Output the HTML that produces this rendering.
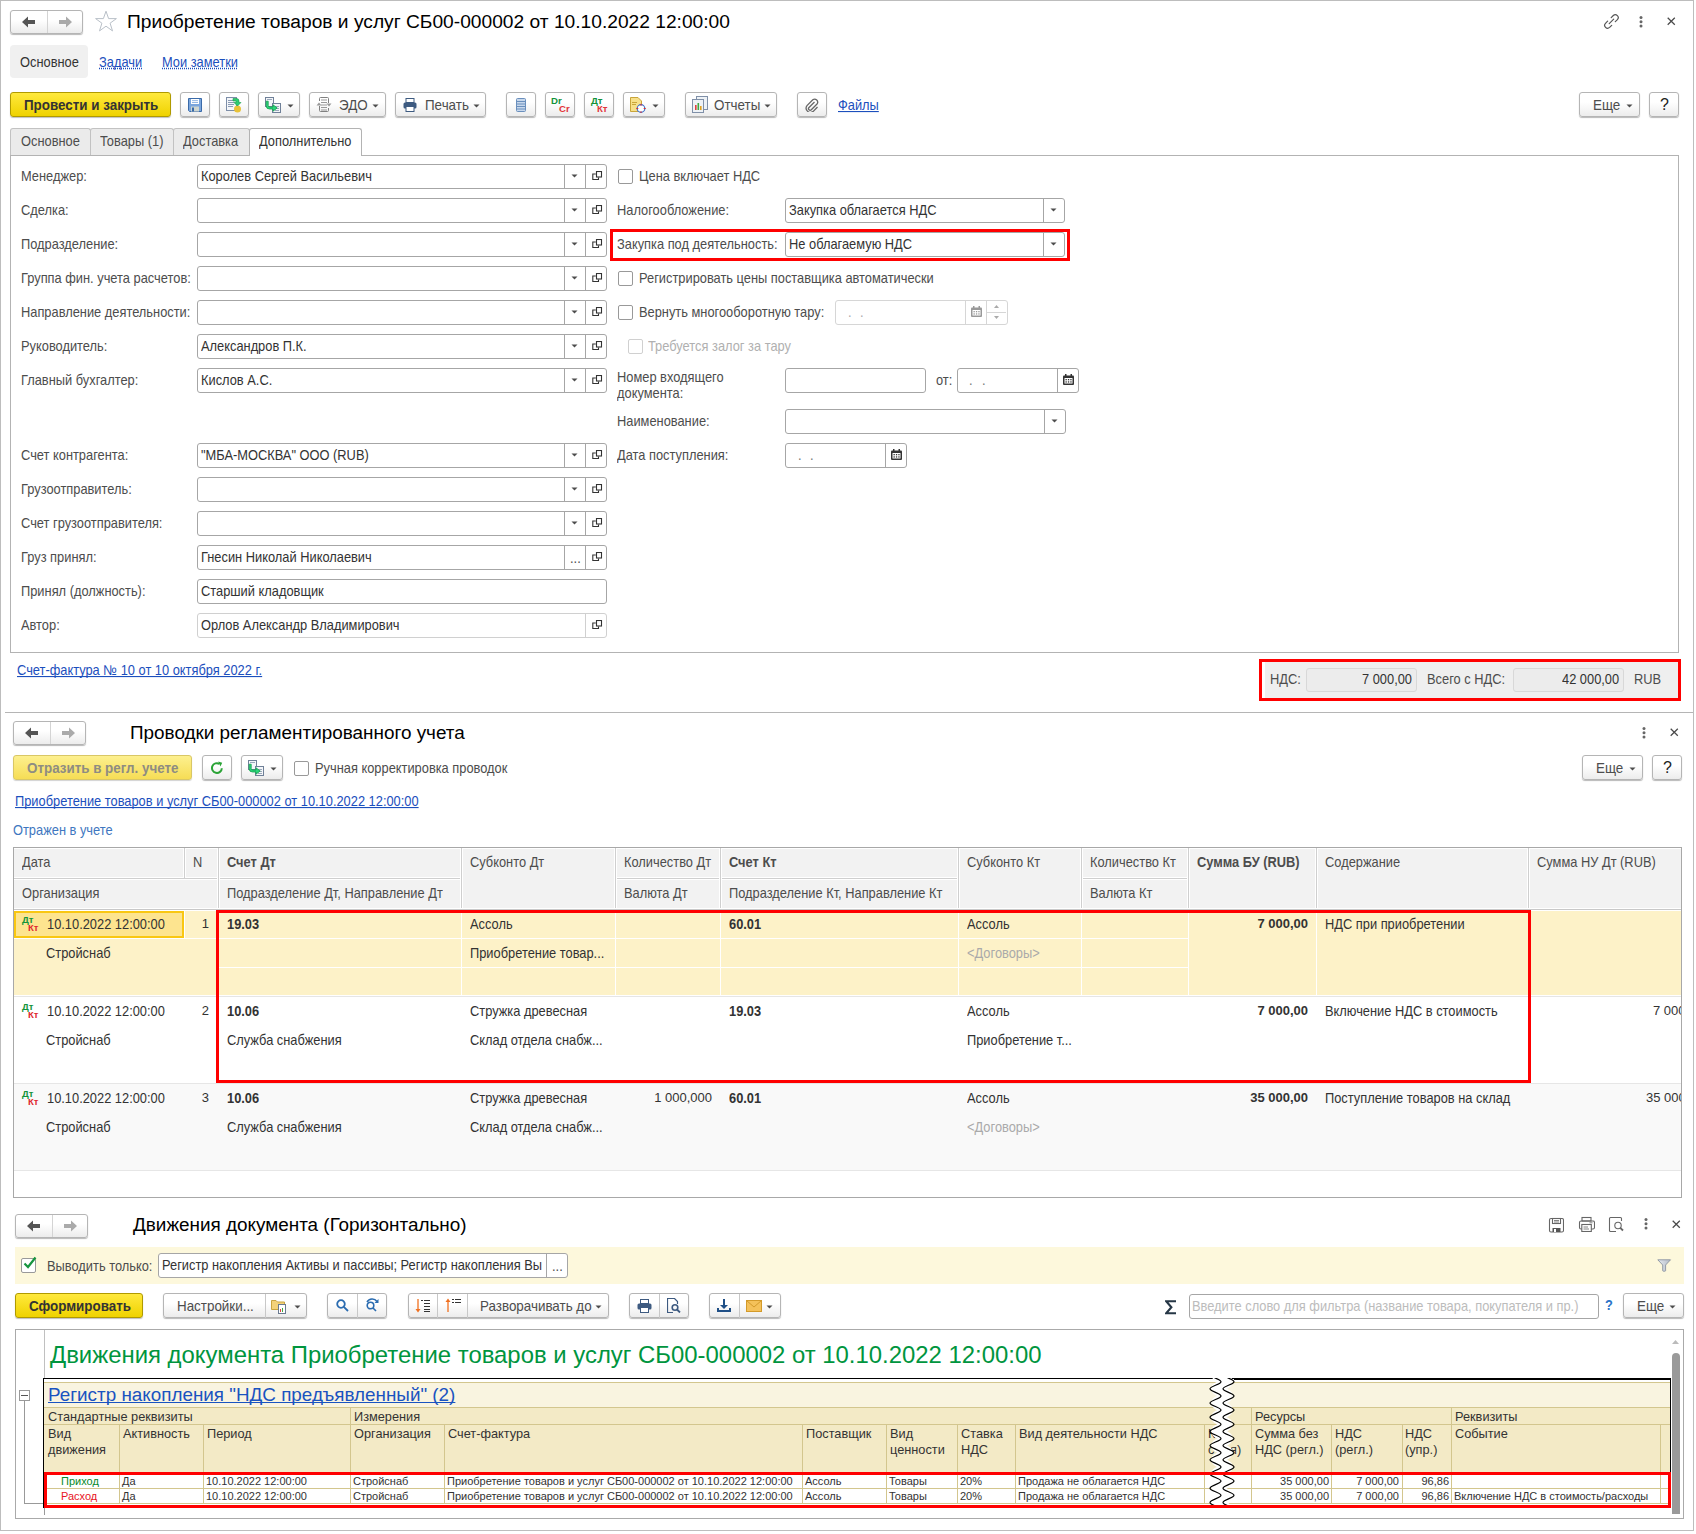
<!DOCTYPE html><html><head><meta charset="utf-8"><style>
html,body{margin:0;padding:0;background:#fff;width:1696px;height:1534px;overflow:hidden;position:relative}
body{font-family:"Liberation Sans",sans-serif}
.a,.t{position:absolute}
.t{white-space:nowrap;text-decoration-skip-ink:none}
.bw{box-sizing:border-box;border:1px solid #b5b5b5;border-radius:3px;background:linear-gradient(#ffffff 40%,#ececec);box-shadow:0 1px 1px rgba(0,0,0,.28)}
.by{box-sizing:border-box;border:1px solid #b09a00;border-radius:3px;background:linear-gradient(#ffe93d,#efd200);box-shadow:0 1px 1px rgba(0,0,0,.25)}
</style></head><body><div class="a" style="left:0px;top:0px;width:1694px;height:1531px;box-sizing:border-box;border:1px solid #bdbdbd;"></div>
<div class="a bw" style="left:10px;top:10px;width:73px;height:24px;"></div>
<div class="a" style="left:47px;top:11px;width:1px;height:22px;background:#d4d4d4"></div>
<svg width="16" height="12" style="position:absolute;left:22px;top:16px"><path d="M0 6L6 0.5V4H13V8H6V11.5Z" fill="#555"/></svg>
<svg width="16" height="12" style="position:absolute;left:58px;top:16px"><path d="M14 6L8 0.5V4H1V8H8V11.5Z" fill="#aaa"/></svg>
<svg width="24" height="23" style="position:absolute;left:94px;top:10px"><path d="M12 1.2L14.6 8.6H22.4L16.1 13.2L18.5 20.9L12 16.2L5.5 20.9L7.9 13.2L1.6 8.6H9.4Z" fill="none" stroke="#b9c0c8" stroke-width="1"/></svg>
<div class="t " style="left:127px;top:11px;font-size:19.2px;line-height:22px;color:#000;">Приобретение товаров и услуг СБ00-000002 от 10.10.2022 12:00:00</div>
<svg width="17" height="17" style="position:absolute;left:1603px;top:13px" fill="none" stroke="#555" stroke-width="1.2" stroke-linecap="round"><path d="M8.2 4.6L10.3 2.5A2.9 2.9 0 0 1 14.4 6.6L12.3 8.7"/><path d="M8.7 12.3L6.6 14.4A2.9 2.9 0 0 1 2.5 10.3L4.6 8.2"/><path d="M6.2 10.7L10.7 6.2"/></svg>
<svg width="4" height="12" style="position:absolute;left:1639px;top:16px" fill="#666"><circle cx="2" cy="1.6" r="1.5"/><circle cx="2" cy="5.8" r="1.5"/><circle cx="2" cy="10" r="1.5"/></svg>
<svg width="9" height="9" style="position:absolute;left:1667px;top:17px"><path d="M0.7 0.7L7.8 7.8M7.8 0.7L0.7 7.8" stroke="#4a4a4a" stroke-width="1.25"/></svg>
<div class="a" style="left:10px;top:45px;width:78px;height:33px;background:#f0f0f0;border-radius:4px"></div>
<div class="t " style="left:20px;top:54px;font-size:12.85px;line-height:16px;color:#333;transform:scaleY(1.1);transform-origin:0 3px;">Основное</div>
<div class="t " style="left:99px;top:54px;font-size:12.85px;line-height:16px;color:#1c4fbd;text-decoration:underline dotted;transform:scaleY(1.1);transform-origin:0 3px;">Задачи</div>
<div class="t " style="left:162px;top:54px;font-size:12.85px;line-height:16px;color:#1c4fbd;text-decoration:underline dotted;transform:scaleY(1.1);transform-origin:0 3px;">Мои заметки</div>
<div class="a by" style="left:10px;top:92px;width:161px;height:25px;"></div>
<div class="t " style="left:24px;top:97px;font-size:13.4px;line-height:16px;color:#333;font-weight:bold;transform:scaleY(1.1);transform-origin:0 3px;">Провести и закрыть</div>
<div class="a bw" style="left:180px;top:92px;width:30px;height:25px;"></div>
<svg width="14" height="14" style="position:absolute;left:188px;top:98px"><path d="M0.5 0.5H13.5V13.5H1.5L0.5 12.5Z" fill="#7aa6dd" stroke="#3a6aa8"/><rect x="3" y="1" width="8" height="5" fill="#fff"/><rect x="4" y="2.3" width="6" height="0.8" fill="#7aa6dd"/><rect x="4" y="4" width="6" height="0.8" fill="#7aa6dd"/><rect x="3" y="8.5" width="8" height="5" fill="#cfd6d0"/><rect x="4" y="9.5" width="2" height="4" fill="#3a6aa8"/></svg>
<div class="a bw" style="left:219px;top:92px;width:30px;height:25px;"></div>
<svg width="16" height="16" style="position:absolute;left:226px;top:97px"><rect x="0.5" y="0.5" width="10" height="13" fill="#f4f6f9" stroke="#7d8ea8"/><g fill="#8a9ab3"><rect x="2" y="3" width="6" height="1"/><rect x="2" y="5" width="6" height="1"/><rect x="2" y="7" width="6" height="1"/><rect x="2" y="9" width="5" height="1"/></g><ellipse cx="11.5" cy="12" rx="3.5" ry="3.5" fill="#e8c238"/><path d="M7 1.5H10.5Q13 1.5 13 4V5.5H15L11.5 9L8 5.5H10V4.5Q10 4 9.5 4H7Z" fill="#2ecc71" stroke="#179a4a" stroke-width="0.6"/></svg>
<div class="a bw" style="left:258px;top:92px;width:42px;height:25px;"></div>
<svg width="18" height="17" style="position:absolute;left:264px;top:96px"><rect x="1.5" y="1.5" width="8" height="9" fill="#f4f6f9" stroke="#6f8098"/><path d="M3 3.5H8" stroke="#9aa8ba"/><rect x="8.5" y="7.5" width="8" height="9" fill="#f4f6f9" stroke="#6f8098"/><path d="M11 10.5H15M11 12.5H15M11 14.5H15" stroke="#9aa8ba"/><path d="M4.2 5.2V9.5Q4.2 11 6 11H9V8.8L13.2 12L9 15.2V13H5.5Q2.2 13 2.2 9.8V5.2Z" fill="#2bd47a" stroke="#13a04c" stroke-width="0.8"/></svg>
<svg width="7" height="4" style="position:absolute;left:287px;top:104px"><path d="M0.5 0.5H6.5L3.5 3.5Z" fill="#4d4d4d"/></svg>
<div class="a bw" style="left:309px;top:92px;width:77px;height:25px;"></div>
<svg width="17" height="15" style="position:absolute;left:316px;top:97px" fill="none" stroke="#808080" stroke-width="1"><path d="M3.5 4V1.5Q3.5 0.5 4.5 0.5H11.5Q12.5 0.5 12.5 1.5V6"/><path d="M3.5 9V13.5Q3.5 14.5 4.5 14.5H11.5Q12.5 14.5 12.5 13.5V11"/><path d="M5 3H11M5 5.5H11M5 8H11M5 10.5H11M5 13H11" stroke="#999"/><path d="M0.5 8.5L3 5.5L5.5 8.5Z" fill="#999" stroke="none"/><path d="M10.5 6.5L13 9.5L15.5 6.5Z" fill="#999" stroke="none"/></svg>
<div class="t " style="left:339px;top:97px;font-size:13.4px;line-height:16px;color:#4d4d4d;transform:scaleY(1.1);transform-origin:0 3px;">ЭДО</div>
<svg width="7" height="4" style="position:absolute;left:372px;top:104px"><path d="M0.5 0.5H6.5L3.5 3.5Z" fill="#4d4d4d"/></svg>
<div class="a bw" style="left:395px;top:92px;width:91px;height:25px;"></div>
<svg width="14" height="14" style="position:absolute;left:403px;top:98px"><rect x="3" y="0.5" width="8" height="4" fill="#fff" stroke="#3d5a80"/><rect x="0.5" y="4.5" width="13" height="6" rx="1.5" fill="#3d5a80"/><rect x="3" y="8.5" width="8" height="5" fill="#fff" stroke="#3d5a80"/></svg>
<div class="t " style="left:425px;top:97px;font-size:13.4px;line-height:16px;color:#4d4d4d;transform:scaleY(1.1);transform-origin:0 3px;">Печать</div>
<svg width="7" height="4" style="position:absolute;left:473px;top:104px"><path d="M0.5 0.5H6.5L3.5 3.5Z" fill="#4d4d4d"/></svg>
<div class="a bw" style="left:506px;top:92px;width:30px;height:25px;"></div>
<svg width="10" height="14" style="position:absolute;left:516px;top:98px"><rect x="0.5" y="0.5" width="9" height="13" rx="1" fill="#c8d8ec" stroke="#6a8fbd"/><g fill="#6a8fbd"><rect x="1" y="3" width="8" height="1"/><rect x="1" y="5.5" width="8" height="1"/><rect x="1" y="8" width="8" height="1"/><rect x="1" y="10.5" width="8" height="1"/></g></svg>
<div class="a bw" style="left:545px;top:92px;width:30px;height:25px;"></div>
<div class="t " style="left:551px;top:96px;font-size:9.6px;line-height:10px;color:#12933a;font-weight:bold;">Dr</div>
<div class="t " style="left:559px;top:104px;font-size:9.6px;line-height:10px;color:#e2353a;font-weight:bold;">Cr</div>
<div class="a bw" style="left:584px;top:92px;width:30px;height:25px;"></div>
<div class="t " style="left:591px;top:96px;font-size:9.6px;line-height:10px;color:#12933a;font-weight:bold;">Дт</div>
<div class="t " style="left:597px;top:104px;font-size:9.6px;line-height:10px;color:#e2353a;font-weight:bold;">Кт</div>
<div class="a bw" style="left:623px;top:92px;width:42px;height:25px;"></div>
<svg width="16" height="16" style="position:absolute;left:630px;top:97px"><path d="M0.5 0.5H8L11.5 4V14.5H0.5Z" fill="#f7e08a" stroke="#c9a53a"/><g fill="#c9a53a"><rect x="2" y="5" width="5" height="1"/><rect x="2" y="7" width="4" height="1"/></g><circle cx="11" cy="11.5" r="3.8" fill="#fff" stroke="#3a6cc8" stroke-width="1.2"/><g fill="#e03030"><rect x="10.5" y="6.8" width="1" height="2"/><rect x="10.5" y="14.2" width="1" height="2"/><rect x="6.3" y="11" width="2" height="1"/><rect x="13.7" y="11" width="2" height="1"/></g></svg>
<svg width="7" height="4" style="position:absolute;left:652px;top:104px"><path d="M0.5 0.5H6.5L3.5 3.5Z" fill="#4d4d4d"/></svg>
<div class="a bw" style="left:685px;top:92px;width:92px;height:25px;"></div>
<svg width="17" height="17" style="position:absolute;left:692px;top:96px"><rect x="4.5" y="0.5" width="11" height="13" fill="#eef2f6" stroke="#8090a8"/><rect x="0.5" y="3.5" width="11" height="13" fill="#eef2f6" stroke="#8090a8"/><rect x="3" y="9" width="1.6" height="5" fill="#e04040"/><rect x="5.5" y="7" width="1.6" height="7" fill="#40a840"/><rect x="8" y="10" width="1.6" height="4" fill="#e0a020"/></svg>
<div class="t " style="left:714px;top:97px;font-size:13.4px;line-height:16px;color:#4d4d4d;transform:scaleY(1.1);transform-origin:0 3px;">Отчеты</div>
<svg width="7" height="4" style="position:absolute;left:764px;top:104px"><path d="M0.5 0.5H6.5L3.5 3.5Z" fill="#4d4d4d"/></svg>
<div class="a bw" style="left:797px;top:92px;width:30px;height:25px;"></div>
<svg width="14" height="14" style="position:absolute;left:805px;top:98px" fill="none" stroke="#666" stroke-width="1.3"><path d="M9.5 4L4 9.5a1.6 1.6 0 0 0 2.3 2.3L12 6a3 3 0 0 0-4.2-4.2L2 7.6a4.3 4.3 0 0 0 6 6L12.5 9"/></svg>
<div class="t " style="left:838px;top:97px;font-size:12.85px;line-height:16px;color:#1c4fbd;text-decoration:underline;transform:scaleY(1.1);transform-origin:0 3px;">Файлы</div>
<div class="a bw" style="left:1579px;top:92px;width:61px;height:25px;"></div>
<div class="t " style="left:1593px;top:97px;font-size:13.4px;line-height:16px;color:#4d4d4d;transform:scaleY(1.1);transform-origin:0 3px;">Еще</div>
<svg width="7" height="4" style="position:absolute;left:1626px;top:104px"><path d="M0.5 0.5H6.5L3.5 3.5Z" fill="#4d4d4d"/></svg>
<div class="a bw" style="left:1649px;top:92px;width:30px;height:25px;"></div>
<div class="t " style="left:1660px;top:97px;font-size:16px;line-height:18px;color:#222;margin-top:-1px">?</div>
<div class="a" style="left:10px;top:128px;width:81px;height:28px;box-sizing:border-box;border:1px solid #c2c2c2;border-bottom:none;background:#ebebeb;border-radius:3px 3px 0 0"></div>
<div class="a" style="left:90px;top:128px;width:84px;height:28px;box-sizing:border-box;border:1px solid #c2c2c2;border-bottom:none;background:#ebebeb;border-radius:3px 3px 0 0"></div>
<div class="a" style="left:173px;top:128px;width:77px;height:28px;box-sizing:border-box;border:1px solid #c2c2c2;border-bottom:none;background:#ebebeb;border-radius:3px 3px 0 0"></div>
<div class="t " style="left:21px;top:133px;font-size:12.85px;line-height:16px;color:#4d4d4d;transform:scaleY(1.1);transform-origin:0 3px;">Основное</div>
<div class="t " style="left:100px;top:133px;font-size:12.85px;line-height:16px;color:#4d4d4d;transform:scaleY(1.1);transform-origin:0 3px;">Товары (1)</div>
<div class="t " style="left:183px;top:133px;font-size:12.85px;line-height:16px;color:#4d4d4d;transform:scaleY(1.1);transform-origin:0 3px;">Доставка</div>
<div class="a" style="left:10px;top:155px;width:1669px;height:498px;box-sizing:border-box;border:1px solid #b3b3b3;background:#fff"></div>
<div class="a" style="left:249px;top:128px;width:113px;height:28px;box-sizing:border-box;border:1px solid #b3b3b3;border-bottom:none;background:#fff;border-radius:3px 3px 0 0"></div>
<div class="t " style="left:259px;top:133px;font-size:12.85px;line-height:16px;color:#333;transform:scaleY(1.1);transform-origin:0 3px;">Дополнительно</div>
<div class="t " style="left:21px;top:168px;font-size:12.85px;line-height:16px;color:#4d4d4d;transform:scaleY(1.1);transform-origin:0 3px;">Менеджер:</div>
<div class="a" style="left:197px;top:164px;width:410px;height:25px;box-sizing:border-box;border:1px solid #a6a6a6;border-radius:3px;background:#fff"></div>
<div class="a" style="left:585px;top:165px;width:1px;height:23px;background:#a6a6a6"></div>
<svg width="12" height="12" style="position:absolute;left:592px;top:171px" fill="none" stroke="#333" stroke-width="1.1"><rect x="4.5" y="0.5" width="5" height="5.5"/><path d="M3.8 3H0.8V8.5H6.5V6.5"/></svg>
<div class="a" style="left:564px;top:165px;width:1px;height:23px;background:#a6a6a6"></div>
<svg width="7" height="4" style="position:absolute;left:571px;top:174px"><path d="M0.5 0.5H6.5L3.5 3.5Z" fill="#4d4d4d"/></svg>
<div class="t " style="left:201px;top:168px;font-size:12.85px;line-height:16px;color:#333;transform:scaleY(1.1);transform-origin:0 3px;">Королев Сергей Васильевич</div>
<div class="t " style="left:21px;top:202px;font-size:12.85px;line-height:16px;color:#4d4d4d;transform:scaleY(1.1);transform-origin:0 3px;">Сделка:</div>
<div class="a" style="left:197px;top:198px;width:410px;height:25px;box-sizing:border-box;border:1px solid #a6a6a6;border-radius:3px;background:#fff"></div>
<div class="a" style="left:585px;top:199px;width:1px;height:23px;background:#a6a6a6"></div>
<svg width="12" height="12" style="position:absolute;left:592px;top:205px" fill="none" stroke="#333" stroke-width="1.1"><rect x="4.5" y="0.5" width="5" height="5.5"/><path d="M3.8 3H0.8V8.5H6.5V6.5"/></svg>
<div class="a" style="left:564px;top:199px;width:1px;height:23px;background:#a6a6a6"></div>
<svg width="7" height="4" style="position:absolute;left:571px;top:208px"><path d="M0.5 0.5H6.5L3.5 3.5Z" fill="#4d4d4d"/></svg>
<div class="t " style="left:21px;top:236px;font-size:12.85px;line-height:16px;color:#4d4d4d;transform:scaleY(1.1);transform-origin:0 3px;">Подразделение:</div>
<div class="a" style="left:197px;top:232px;width:410px;height:25px;box-sizing:border-box;border:1px solid #a6a6a6;border-radius:3px;background:#fff"></div>
<div class="a" style="left:585px;top:233px;width:1px;height:23px;background:#a6a6a6"></div>
<svg width="12" height="12" style="position:absolute;left:592px;top:239px" fill="none" stroke="#333" stroke-width="1.1"><rect x="4.5" y="0.5" width="5" height="5.5"/><path d="M3.8 3H0.8V8.5H6.5V6.5"/></svg>
<div class="a" style="left:564px;top:233px;width:1px;height:23px;background:#a6a6a6"></div>
<svg width="7" height="4" style="position:absolute;left:571px;top:242px"><path d="M0.5 0.5H6.5L3.5 3.5Z" fill="#4d4d4d"/></svg>
<div class="t " style="left:21px;top:270px;font-size:12.85px;line-height:16px;color:#4d4d4d;transform:scaleY(1.1);transform-origin:0 3px;">Группа фин. учета расчетов:</div>
<div class="a" style="left:197px;top:266px;width:410px;height:25px;box-sizing:border-box;border:1px solid #a6a6a6;border-radius:3px;background:#fff"></div>
<div class="a" style="left:585px;top:267px;width:1px;height:23px;background:#a6a6a6"></div>
<svg width="12" height="12" style="position:absolute;left:592px;top:273px" fill="none" stroke="#333" stroke-width="1.1"><rect x="4.5" y="0.5" width="5" height="5.5"/><path d="M3.8 3H0.8V8.5H6.5V6.5"/></svg>
<div class="a" style="left:564px;top:267px;width:1px;height:23px;background:#a6a6a6"></div>
<svg width="7" height="4" style="position:absolute;left:571px;top:276px"><path d="M0.5 0.5H6.5L3.5 3.5Z" fill="#4d4d4d"/></svg>
<div class="t " style="left:21px;top:304px;font-size:12.85px;line-height:16px;color:#4d4d4d;transform:scaleY(1.1);transform-origin:0 3px;">Направление деятельности:</div>
<div class="a" style="left:197px;top:300px;width:410px;height:25px;box-sizing:border-box;border:1px solid #a6a6a6;border-radius:3px;background:#fff"></div>
<div class="a" style="left:585px;top:301px;width:1px;height:23px;background:#a6a6a6"></div>
<svg width="12" height="12" style="position:absolute;left:592px;top:307px" fill="none" stroke="#333" stroke-width="1.1"><rect x="4.5" y="0.5" width="5" height="5.5"/><path d="M3.8 3H0.8V8.5H6.5V6.5"/></svg>
<div class="a" style="left:564px;top:301px;width:1px;height:23px;background:#a6a6a6"></div>
<svg width="7" height="4" style="position:absolute;left:571px;top:310px"><path d="M0.5 0.5H6.5L3.5 3.5Z" fill="#4d4d4d"/></svg>
<div class="t " style="left:21px;top:338px;font-size:12.85px;line-height:16px;color:#4d4d4d;transform:scaleY(1.1);transform-origin:0 3px;">Руководитель:</div>
<div class="a" style="left:197px;top:334px;width:410px;height:25px;box-sizing:border-box;border:1px solid #a6a6a6;border-radius:3px;background:#fff"></div>
<div class="a" style="left:585px;top:335px;width:1px;height:23px;background:#a6a6a6"></div>
<svg width="12" height="12" style="position:absolute;left:592px;top:341px" fill="none" stroke="#333" stroke-width="1.1"><rect x="4.5" y="0.5" width="5" height="5.5"/><path d="M3.8 3H0.8V8.5H6.5V6.5"/></svg>
<div class="a" style="left:564px;top:335px;width:1px;height:23px;background:#a6a6a6"></div>
<svg width="7" height="4" style="position:absolute;left:571px;top:344px"><path d="M0.5 0.5H6.5L3.5 3.5Z" fill="#4d4d4d"/></svg>
<div class="t " style="left:201px;top:338px;font-size:12.85px;line-height:16px;color:#333;transform:scaleY(1.1);transform-origin:0 3px;">Александров П.К.</div>
<div class="t " style="left:21px;top:372px;font-size:12.85px;line-height:16px;color:#4d4d4d;transform:scaleY(1.1);transform-origin:0 3px;">Главный бухгалтер:</div>
<div class="a" style="left:197px;top:368px;width:410px;height:25px;box-sizing:border-box;border:1px solid #a6a6a6;border-radius:3px;background:#fff"></div>
<div class="a" style="left:585px;top:369px;width:1px;height:23px;background:#a6a6a6"></div>
<svg width="12" height="12" style="position:absolute;left:592px;top:375px" fill="none" stroke="#333" stroke-width="1.1"><rect x="4.5" y="0.5" width="5" height="5.5"/><path d="M3.8 3H0.8V8.5H6.5V6.5"/></svg>
<div class="a" style="left:564px;top:369px;width:1px;height:23px;background:#a6a6a6"></div>
<svg width="7" height="4" style="position:absolute;left:571px;top:378px"><path d="M0.5 0.5H6.5L3.5 3.5Z" fill="#4d4d4d"/></svg>
<div class="t " style="left:201px;top:372px;font-size:12.85px;line-height:16px;color:#333;transform:scaleY(1.1);transform-origin:0 3px;">Кислов А.С.</div>
<div class="t " style="left:21px;top:447px;font-size:12.85px;line-height:16px;color:#4d4d4d;transform:scaleY(1.1);transform-origin:0 3px;">Счет контрагента:</div>
<div class="a" style="left:197px;top:443px;width:410px;height:25px;box-sizing:border-box;border:1px solid #a6a6a6;border-radius:3px;background:#fff"></div>
<div class="a" style="left:585px;top:444px;width:1px;height:23px;background:#a6a6a6"></div>
<svg width="12" height="12" style="position:absolute;left:592px;top:450px" fill="none" stroke="#333" stroke-width="1.1"><rect x="4.5" y="0.5" width="5" height="5.5"/><path d="M3.8 3H0.8V8.5H6.5V6.5"/></svg>
<div class="a" style="left:564px;top:444px;width:1px;height:23px;background:#a6a6a6"></div>
<svg width="7" height="4" style="position:absolute;left:571px;top:453px"><path d="M0.5 0.5H6.5L3.5 3.5Z" fill="#4d4d4d"/></svg>
<div class="t " style="left:201px;top:447px;font-size:12.85px;line-height:16px;color:#333;transform:scaleY(1.1);transform-origin:0 3px;">"МБА-МОСКВА" ООО (RUB)</div>
<div class="t " style="left:21px;top:481px;font-size:12.85px;line-height:16px;color:#4d4d4d;transform:scaleY(1.1);transform-origin:0 3px;">Грузоотправитель:</div>
<div class="a" style="left:197px;top:477px;width:410px;height:25px;box-sizing:border-box;border:1px solid #a6a6a6;border-radius:3px;background:#fff"></div>
<div class="a" style="left:585px;top:478px;width:1px;height:23px;background:#a6a6a6"></div>
<svg width="12" height="12" style="position:absolute;left:592px;top:484px" fill="none" stroke="#333" stroke-width="1.1"><rect x="4.5" y="0.5" width="5" height="5.5"/><path d="M3.8 3H0.8V8.5H6.5V6.5"/></svg>
<div class="a" style="left:564px;top:478px;width:1px;height:23px;background:#a6a6a6"></div>
<svg width="7" height="4" style="position:absolute;left:571px;top:487px"><path d="M0.5 0.5H6.5L3.5 3.5Z" fill="#4d4d4d"/></svg>
<div class="t " style="left:21px;top:515px;font-size:12.85px;line-height:16px;color:#4d4d4d;transform:scaleY(1.1);transform-origin:0 3px;">Счет грузоотправителя:</div>
<div class="a" style="left:197px;top:511px;width:410px;height:25px;box-sizing:border-box;border:1px solid #a6a6a6;border-radius:3px;background:#fff"></div>
<div class="a" style="left:585px;top:512px;width:1px;height:23px;background:#a6a6a6"></div>
<svg width="12" height="12" style="position:absolute;left:592px;top:518px" fill="none" stroke="#333" stroke-width="1.1"><rect x="4.5" y="0.5" width="5" height="5.5"/><path d="M3.8 3H0.8V8.5H6.5V6.5"/></svg>
<div class="a" style="left:564px;top:512px;width:1px;height:23px;background:#a6a6a6"></div>
<svg width="7" height="4" style="position:absolute;left:571px;top:521px"><path d="M0.5 0.5H6.5L3.5 3.5Z" fill="#4d4d4d"/></svg>
<div class="t " style="left:21px;top:549px;font-size:12.85px;line-height:16px;color:#4d4d4d;transform:scaleY(1.1);transform-origin:0 3px;">Груз принял:</div>
<div class="a" style="left:197px;top:545px;width:410px;height:25px;box-sizing:border-box;border:1px solid #a6a6a6;border-radius:3px;background:#fff"></div>
<div class="a" style="left:585px;top:546px;width:1px;height:23px;background:#a6a6a6"></div>
<svg width="12" height="12" style="position:absolute;left:592px;top:552px" fill="none" stroke="#333" stroke-width="1.1"><rect x="4.5" y="0.5" width="5" height="5.5"/><path d="M3.8 3H0.8V8.5H6.5V6.5"/></svg>
<div class="a" style="left:564px;top:546px;width:1px;height:23px;background:#a6a6a6"></div>
<div class="t " style="left:570px;top:550px;font-size:12.85px;line-height:16px;color:#4d4d4d;transform:scaleY(1.1);transform-origin:0 3px;">...</div>
<div class="t " style="left:201px;top:549px;font-size:12.85px;line-height:16px;color:#333;transform:scaleY(1.1);transform-origin:0 3px;">Гнесин Николай Николаевич</div>
<div class="t " style="left:21px;top:583px;font-size:12.85px;line-height:16px;color:#4d4d4d;transform:scaleY(1.1);transform-origin:0 3px;">Принял (должность):</div>
<div class="a" style="left:197px;top:579px;width:410px;height:25px;box-sizing:border-box;border:1px solid #a6a6a6;border-radius:3px;background:#fff"></div>
<div class="t " style="left:201px;top:583px;font-size:12.85px;line-height:16px;color:#333;transform:scaleY(1.1);transform-origin:0 3px;">Старший кладовщик</div>
<div class="t " style="left:21px;top:617px;font-size:12.85px;line-height:16px;color:#4d4d4d;transform:scaleY(1.1);transform-origin:0 3px;">Автор:</div>
<div class="a" style="left:197px;top:613px;width:410px;height:25px;box-sizing:border-box;border:1px solid #d0d0d0;border-radius:3px;background:#fff"></div>
<div class="a" style="left:585px;top:614px;width:1px;height:23px;background:#d0d0d0"></div>
<svg width="12" height="12" style="position:absolute;left:592px;top:620px" fill="none" stroke="#333" stroke-width="1.1"><rect x="4.5" y="0.5" width="5" height="5.5"/><path d="M3.8 3H0.8V8.5H6.5V6.5"/></svg>
<div class="t " style="left:201px;top:617px;font-size:12.85px;line-height:16px;color:#333;transform:scaleY(1.1);transform-origin:0 3px;">Орлов Александр Владимирович</div>
<div class="a" style="left:618px;top:169px;width:15px;height:15px;box-sizing:border-box;border:1px solid #999;border-radius:2px;background:#fff"></div>
<div class="t " style="left:639px;top:168px;font-size:12.85px;line-height:16px;color:#4d4d4d;transform:scaleY(1.1);transform-origin:0 3px;">Цена включает НДС</div>
<div class="t " style="left:617px;top:202px;font-size:12.85px;line-height:16px;color:#4d4d4d;transform:scaleY(1.1);transform-origin:0 3px;">Налогообложение:</div>
<div class="a" style="left:785px;top:198px;width:280px;height:25px;box-sizing:border-box;border:1px solid #a6a6a6;border-radius:3px;background:#fff"></div>
<div class="a" style="left:1043px;top:199px;width:1px;height:23px;background:#a6a6a6"></div>
<svg width="7" height="4" style="position:absolute;left:1050px;top:208px"><path d="M0.5 0.5H6.5L3.5 3.5Z" fill="#4d4d4d"/></svg>
<div class="t " style="left:789px;top:202px;font-size:12.85px;line-height:16px;color:#333;transform:scaleY(1.1);transform-origin:0 3px;">Закупка облагается НДС</div>
<div class="t " style="left:617px;top:236px;font-size:12.85px;line-height:16px;color:#4d4d4d;transform:scaleY(1.1);transform-origin:0 3px;">Закупка под деятельность:</div>
<div class="a" style="left:785px;top:232px;width:280px;height:25px;box-sizing:border-box;border:1px solid #a6a6a6;border-radius:3px;background:#fff"></div>
<div class="a" style="left:1043px;top:233px;width:1px;height:23px;background:#a6a6a6"></div>
<svg width="7" height="4" style="position:absolute;left:1050px;top:242px"><path d="M0.5 0.5H6.5L3.5 3.5Z" fill="#4d4d4d"/></svg>
<div class="t " style="left:789px;top:236px;font-size:12.85px;line-height:16px;color:#333;transform:scaleY(1.1);transform-origin:0 3px;">Не облагаемую НДС</div>
<div class="a" style="left:610px;top:229px;width:460px;height:32px;box-sizing:border-box;border:3px solid #ff0000"></div>
<div class="a" style="left:618px;top:271px;width:15px;height:15px;box-sizing:border-box;border:1px solid #999;border-radius:2px;background:#fff"></div>
<div class="t " style="left:639px;top:270px;font-size:12.85px;line-height:16px;color:#4d4d4d;transform:scaleY(1.1);transform-origin:0 3px;">Регистрировать цены поставщика автоматически</div>
<div class="a" style="left:618px;top:305px;width:15px;height:15px;box-sizing:border-box;border:1px solid #999;border-radius:2px;background:#fff"></div>
<div class="t " style="left:639px;top:304px;font-size:12.85px;line-height:16px;color:#4d4d4d;transform:scaleY(1.1);transform-origin:0 3px;">Вернуть многооборотную тару:</div>
<div class="a" style="left:835px;top:300px;width:173px;height:25px;box-sizing:border-box;border:1px solid #d6d6d6;border-radius:3px;background:#fff"></div>
<div class="a" style="left:986px;top:301px;width:1px;height:23px;background:#d6d6d6"></div>
<div class="a" style="left:987px;top:312px;width:19px;height:1px;background:#d6d6d6"></div>
<svg width="5" height="3" style="position:absolute;left:994px;top:305px"><path d="M0 3H5L2.5 0Z" fill="#aaa"/></svg>
<svg width="5" height="3" style="position:absolute;left:994px;top:316px"><path d="M0 0H5L2.5 3Z" fill="#aaa"/></svg>
<div class="a" style="left:965px;top:301px;width:1px;height:23px;background:#d6d6d6"></div>
<svg width="11" height="11" style="position:absolute;left:971px;top:306px"><rect x="0" y="1.5" width="11" height="9.5" rx="1" fill="#999"/><rect x="1.5" y="4" width="8" height="5.5" fill="#fff"/><rect x="2" y="0" width="1.5" height="3" fill="#999"/><rect x="7.5" y="0" width="1.5" height="3" fill="#999"/><g fill="#999"><rect x="2.5" y="5" width="1.3" height="1.3"/><rect x="4.9" y="5" width="1.3" height="1.3"/><rect x="7.3" y="5" width="1.3" height="1.3"/><rect x="2.5" y="7.3" width="1.3" height="1.3"/><rect x="4.9" y="7.3" width="1.3" height="1.3"/><rect x="7.3" y="7.3" width="1.3" height="1.3"/></g></svg>
<div class="t " style="left:848px;top:304px;font-size:12.85px;line-height:16px;color:#aaa;transform:scaleY(1.1);transform-origin:0 3px;">.</div>
<div class="t " style="left:860px;top:304px;font-size:12.85px;line-height:16px;color:#aaa;transform:scaleY(1.1);transform-origin:0 3px;">.</div>
<div class="a" style="left:628px;top:339px;width:15px;height:15px;box-sizing:border-box;border:1px solid #d0d0d0;border-radius:2px;background:#fff"></div>
<div class="t " style="left:648px;top:338px;font-size:12.85px;line-height:16px;color:#b0b0b0;transform:scaleY(1.1);transform-origin:0 3px;">Требуется залог за тару</div>
<div class="t " style="left:617px;top:369px;font-size:12.85px;line-height:16px;color:#4d4d4d;transform:scaleY(1.1);transform-origin:0 3px;">Номер входящего</div>
<div class="t " style="left:617px;top:385px;font-size:12.85px;line-height:16px;color:#4d4d4d;transform:scaleY(1.1);transform-origin:0 3px;">документа:</div>
<div class="a" style="left:785px;top:368px;width:141px;height:25px;box-sizing:border-box;border:1px solid #a6a6a6;border-radius:3px;background:#fff"></div>
<div class="t " style="left:936px;top:372px;font-size:12.85px;line-height:16px;color:#4d4d4d;transform:scaleY(1.1);transform-origin:0 3px;">от:</div>
<div class="a" style="left:957px;top:368px;width:122px;height:25px;box-sizing:border-box;border:1px solid #a6a6a6;border-radius:3px;background:#fff"></div>
<div class="a" style="left:1057px;top:369px;width:1px;height:23px;background:#a6a6a6"></div>
<svg width="11" height="11" style="position:absolute;left:1063px;top:374px"><rect x="0" y="1.5" width="11" height="9.5" rx="1" fill="#333"/><rect x="1.5" y="4" width="8" height="5.5" fill="#fff"/><rect x="2" y="0" width="1.5" height="3" fill="#333"/><rect x="7.5" y="0" width="1.5" height="3" fill="#333"/><g fill="#333"><rect x="2.5" y="5" width="1.3" height="1.3"/><rect x="4.9" y="5" width="1.3" height="1.3"/><rect x="7.3" y="5" width="1.3" height="1.3"/><rect x="2.5" y="7.3" width="1.3" height="1.3"/><rect x="4.9" y="7.3" width="1.3" height="1.3"/><rect x="7.3" y="7.3" width="1.3" height="1.3"/></g></svg>
<div class="t " style="left:969px;top:372px;font-size:12.85px;line-height:16px;color:#777;transform:scaleY(1.1);transform-origin:0 3px;">.</div>
<div class="t " style="left:982px;top:372px;font-size:12.85px;line-height:16px;color:#777;transform:scaleY(1.1);transform-origin:0 3px;">.</div>
<div class="t " style="left:617px;top:413px;font-size:12.85px;line-height:16px;color:#4d4d4d;transform:scaleY(1.1);transform-origin:0 3px;">Наименование:</div>
<div class="a" style="left:785px;top:409px;width:281px;height:25px;box-sizing:border-box;border:1px solid #a6a6a6;border-radius:3px;background:#fff"></div>
<div class="a" style="left:1044px;top:410px;width:1px;height:23px;background:#a6a6a6"></div>
<svg width="7" height="4" style="position:absolute;left:1051px;top:419px"><path d="M0.5 0.5H6.5L3.5 3.5Z" fill="#4d4d4d"/></svg>
<div class="t " style="left:617px;top:447px;font-size:12.85px;line-height:16px;color:#4d4d4d;transform:scaleY(1.1);transform-origin:0 3px;">Дата поступления:</div>
<div class="a" style="left:785px;top:443px;width:122px;height:25px;box-sizing:border-box;border:1px solid #a6a6a6;border-radius:3px;background:#fff"></div>
<div class="a" style="left:885px;top:444px;width:1px;height:23px;background:#a6a6a6"></div>
<svg width="11" height="11" style="position:absolute;left:891px;top:449px"><rect x="0" y="1.5" width="11" height="9.5" rx="1" fill="#333"/><rect x="1.5" y="4" width="8" height="5.5" fill="#fff"/><rect x="2" y="0" width="1.5" height="3" fill="#333"/><rect x="7.5" y="0" width="1.5" height="3" fill="#333"/><g fill="#333"><rect x="2.5" y="5" width="1.3" height="1.3"/><rect x="4.9" y="5" width="1.3" height="1.3"/><rect x="7.3" y="5" width="1.3" height="1.3"/><rect x="2.5" y="7.3" width="1.3" height="1.3"/><rect x="4.9" y="7.3" width="1.3" height="1.3"/><rect x="7.3" y="7.3" width="1.3" height="1.3"/></g></svg>
<div class="t " style="left:798px;top:447px;font-size:12.85px;line-height:16px;color:#777;transform:scaleY(1.1);transform-origin:0 3px;">.</div>
<div class="t " style="left:810px;top:447px;font-size:12.85px;line-height:16px;color:#777;transform:scaleY(1.1);transform-origin:0 3px;">.</div>
<div class="t " style="left:17px;top:662px;font-size:12.85px;line-height:16px;color:#1c4fbd;text-decoration:underline;transform:scaleY(1.1);transform-origin:0 3px;">Счет-фактура № 10 от 10 октября 2022 г.</div>
<div class="a" style="left:1265px;top:662px;width:413px;height:36px;background:#efefef"></div>
<div class="a" style="left:1259px;top:659px;width:422px;height:42px;box-sizing:border-box;border:3px solid #ff0000"></div>
<div class="t " style="left:1270px;top:671px;font-size:12.85px;line-height:16px;color:#4d4d4d;transform:scaleY(1.1);transform-origin:0 3px;">НДС:</div>
<div class="a" style="left:1306px;top:668px;width:111px;height:24px;box-sizing:border-box;border:1px solid #d8d8d8;border-radius:3px;background:#ececec"></div>
<div class="t " style="left:1362px;top:671px;font-size:12.85px;line-height:16px;color:#333;transform:scaleY(1.1);transform-origin:0 3px;">7 000,00</div>
<div class="t " style="left:1427px;top:671px;font-size:12.85px;line-height:16px;color:#4d4d4d;transform:scaleY(1.1);transform-origin:0 3px;">Всего с НДС:</div>
<div class="a" style="left:1513px;top:668px;width:111px;height:24px;box-sizing:border-box;border:1px solid #d8d8d8;border-radius:3px;background:#ececec"></div>
<div class="t " style="left:1562px;top:671px;font-size:12.85px;line-height:16px;color:#333;transform:scaleY(1.1);transform-origin:0 3px;">42 000,00</div>
<div class="t " style="left:1634px;top:671px;font-size:12.85px;line-height:16px;color:#4d4d4d;transform:scaleY(1.1);transform-origin:0 3px;">RUB</div>
<div class="a" style="left:5px;top:712px;width:1688px;height:1px;background:#b5b5b5"></div>
<div class="a bw" style="left:13px;top:721px;width:73px;height:24px;"></div>
<div class="a" style="left:50px;top:722px;width:1px;height:22px;background:#d4d4d4"></div>
<svg width="16" height="12" style="position:absolute;left:25px;top:727px"><path d="M0 6L6 0.5V4H13V8H6V11.5Z" fill="#555"/></svg>
<svg width="16" height="12" style="position:absolute;left:61px;top:727px"><path d="M14 6L8 0.5V4H1V8H8V11.5Z" fill="#aaa"/></svg>
<div class="t " style="left:130px;top:722px;font-size:18.9px;line-height:22px;color:#000;">Проводки регламентированного учета</div>
<svg width="4" height="12" style="position:absolute;left:1642px;top:727px" fill="#666"><circle cx="2" cy="1.6" r="1.5"/><circle cx="2" cy="5.8" r="1.5"/><circle cx="2" cy="10" r="1.5"/></svg>
<svg width="9" height="9" style="position:absolute;left:1670px;top:728px"><path d="M0.7 0.7L7.8 7.8M7.8 0.7L0.7 7.8" stroke="#4a4a4a" stroke-width="1.25"/></svg>
<div class="a" style="left:13px;top:755px;width:179px;height:25px;box-sizing:border-box;border:1px solid #d9c766;border-radius:3px;background:linear-gradient(#fdf08f,#f6dd55);box-shadow:0 1px 1px rgba(0,0,0,.18)"></div>
<div class="t " style="left:27px;top:760px;font-size:13.4px;line-height:16px;color:#8e8c82;font-weight:bold;transform:scaleY(1.1);transform-origin:0 3px;">Отразить в регл. учете</div>
<div class="a bw" style="left:202px;top:755px;width:30px;height:25px;"></div>
<svg width="14" height="14" style="position:absolute;left:210px;top:761px" fill="none" stroke="#2aa336" stroke-width="2"><path d="M11.8 7.2A4.9 4.9 0 1 1 9.5 2.9"/><path d="M8.2 0.4L12.2 1.8L10.4 5.6Z" fill="#2aa336" stroke="none"/></svg>
<div class="a bw" style="left:241px;top:755px;width:42px;height:25px;"></div>
<svg width="18" height="17" style="position:absolute;left:247px;top:759px"><rect x="1.5" y="1.5" width="8" height="9" fill="#f4f6f9" stroke="#6f8098"/><path d="M3 3.5H8" stroke="#9aa8ba"/><rect x="8.5" y="7.5" width="8" height="9" fill="#f4f6f9" stroke="#6f8098"/><path d="M11 10.5H15M11 12.5H15M11 14.5H15" stroke="#9aa8ba"/><path d="M4.2 5.2V9.5Q4.2 11 6 11H9V8.8L13.2 12L9 15.2V13H5.5Q2.2 13 2.2 9.8V5.2Z" fill="#2bd47a" stroke="#13a04c" stroke-width="0.8"/></svg>
<svg width="7" height="4" style="position:absolute;left:270px;top:767px"><path d="M0.5 0.5H6.5L3.5 3.5Z" fill="#4d4d4d"/></svg>
<div class="a" style="left:294px;top:761px;width:15px;height:15px;box-sizing:border-box;border:1px solid #999;border-radius:2px;background:#fff"></div>
<div class="t " style="left:315px;top:760px;font-size:12.85px;line-height:16px;color:#4d4d4d;transform:scaleY(1.1);transform-origin:0 3px;">Ручная корректировка проводок</div>
<div class="a bw" style="left:1582px;top:755px;width:61px;height:25px;"></div>
<div class="t " style="left:1596px;top:760px;font-size:13.4px;line-height:16px;color:#4d4d4d;transform:scaleY(1.1);transform-origin:0 3px;">Еще</div>
<svg width="7" height="4" style="position:absolute;left:1629px;top:767px"><path d="M0.5 0.5H6.5L3.5 3.5Z" fill="#4d4d4d"/></svg>
<div class="a bw" style="left:1652px;top:755px;width:30px;height:25px;"></div>
<div class="t " style="left:1663px;top:760px;font-size:16px;line-height:18px;color:#222;margin-top:-1px">?</div>
<div class="t " style="left:15px;top:793px;font-size:12.85px;line-height:16px;color:#1c4fbd;text-decoration:underline;transform:scaleY(1.1);transform-origin:0 3px;">Приобретение товаров и услуг СБ00-000002 от 10.10.2022 12:00:00</div>
<div class="t " style="left:13px;top:822px;font-size:12.85px;line-height:16px;color:#3f77c0;transform:scaleY(1.1);transform-origin:0 3px;">Отражен в учете</div>
<div class="a" style="left:13px;top:847px;width:1669px;height:351px;box-sizing:border-box;border:1px solid #a8a8a8;background:#fff"></div>
<div class="a" style="left:14px;top:848px;width:1667px;height:61px;background:#f2f2f2"></div>
<div class="a" style="left:14px;top:848px;width:1667px;height:1px;background:#fff"></div>
<div class="a" style="left:14px;top:877px;width:204px;height:1px;background:#fff"></div>
<div class="a" style="left:14px;top:878px;width:204px;height:1px;background:#cfcfcf"></div>
<div class="a" style="left:14px;top:879px;width:204px;height:1px;background:#fff"></div>
<div class="a" style="left:219px;top:877px;width:242px;height:1px;background:#fff"></div>
<div class="a" style="left:219px;top:878px;width:242px;height:1px;background:#cfcfcf"></div>
<div class="a" style="left:219px;top:879px;width:242px;height:1px;background:#fff"></div>
<div class="a" style="left:616px;top:877px;width:104px;height:1px;background:#fff"></div>
<div class="a" style="left:616px;top:878px;width:104px;height:1px;background:#cfcfcf"></div>
<div class="a" style="left:616px;top:879px;width:104px;height:1px;background:#fff"></div>
<div class="a" style="left:721px;top:877px;width:237px;height:1px;background:#fff"></div>
<div class="a" style="left:721px;top:878px;width:237px;height:1px;background:#cfcfcf"></div>
<div class="a" style="left:721px;top:879px;width:237px;height:1px;background:#fff"></div>
<div class="a" style="left:1082px;top:877px;width:106px;height:1px;background:#fff"></div>
<div class="a" style="left:1082px;top:878px;width:106px;height:1px;background:#cfcfcf"></div>
<div class="a" style="left:1082px;top:879px;width:106px;height:1px;background:#fff"></div>
<div class="a" style="left:183px;top:848px;width:1px;height:29px;background:#fff"></div>
<div class="a" style="left:184px;top:848px;width:1px;height:30px;background:#cfcfcf"></div>
<div class="a" style="left:185px;top:848px;width:1px;height:29px;background:#fff"></div>
<div class="a" style="left:217px;top:848px;width:1px;height:60px;background:#fff"></div>
<div class="a" style="left:218px;top:848px;width:1px;height:61px;background:#cfcfcf"></div>
<div class="a" style="left:219px;top:848px;width:1px;height:60px;background:#fff"></div>
<div class="a" style="left:460px;top:848px;width:1px;height:60px;background:#fff"></div>
<div class="a" style="left:461px;top:848px;width:1px;height:61px;background:#cfcfcf"></div>
<div class="a" style="left:462px;top:848px;width:1px;height:60px;background:#fff"></div>
<div class="a" style="left:614px;top:848px;width:1px;height:60px;background:#fff"></div>
<div class="a" style="left:615px;top:848px;width:1px;height:61px;background:#cfcfcf"></div>
<div class="a" style="left:616px;top:848px;width:1px;height:60px;background:#fff"></div>
<div class="a" style="left:719px;top:848px;width:1px;height:60px;background:#fff"></div>
<div class="a" style="left:720px;top:848px;width:1px;height:61px;background:#cfcfcf"></div>
<div class="a" style="left:721px;top:848px;width:1px;height:60px;background:#fff"></div>
<div class="a" style="left:957px;top:848px;width:1px;height:60px;background:#fff"></div>
<div class="a" style="left:958px;top:848px;width:1px;height:61px;background:#cfcfcf"></div>
<div class="a" style="left:959px;top:848px;width:1px;height:60px;background:#fff"></div>
<div class="a" style="left:1080px;top:848px;width:1px;height:60px;background:#fff"></div>
<div class="a" style="left:1081px;top:848px;width:1px;height:61px;background:#cfcfcf"></div>
<div class="a" style="left:1082px;top:848px;width:1px;height:60px;background:#fff"></div>
<div class="a" style="left:1187px;top:848px;width:1px;height:60px;background:#fff"></div>
<div class="a" style="left:1188px;top:848px;width:1px;height:61px;background:#cfcfcf"></div>
<div class="a" style="left:1189px;top:848px;width:1px;height:60px;background:#fff"></div>
<div class="a" style="left:1315px;top:848px;width:1px;height:60px;background:#fff"></div>
<div class="a" style="left:1316px;top:848px;width:1px;height:61px;background:#cfcfcf"></div>
<div class="a" style="left:1317px;top:848px;width:1px;height:60px;background:#fff"></div>
<div class="a" style="left:1527px;top:848px;width:1px;height:60px;background:#fff"></div>
<div class="a" style="left:1528px;top:848px;width:1px;height:61px;background:#cfcfcf"></div>
<div class="a" style="left:1529px;top:848px;width:1px;height:60px;background:#fff"></div>
<div class="a" style="left:14px;top:908px;width:1667px;height:1px;background:#fff"></div>
<div class="a" style="left:14px;top:909px;width:1667px;height:1px;background:#c8c8c8"></div>
<div class="t " style="left:22px;top:854px;font-size:12.85px;line-height:16px;color:#4d4d4d;transform:scaleY(1.1);transform-origin:0 3px;">Дата</div>
<div class="t " style="left:193px;top:854px;font-size:12.85px;line-height:16px;color:#4d4d4d;transform:scaleY(1.1);transform-origin:0 3px;">N</div>
<div class="t " style="left:227px;top:854px;font-size:12.85px;line-height:16px;color:#4d4d4d;font-weight:bold;transform:scaleY(1.1);transform-origin:0 3px;">Счет Дт</div>
<div class="t " style="left:470px;top:854px;font-size:12.85px;line-height:16px;color:#4d4d4d;transform:scaleY(1.1);transform-origin:0 3px;">Субконто Дт</div>
<div class="t " style="left:624px;top:854px;font-size:12.85px;line-height:16px;color:#4d4d4d;transform:scaleY(1.1);transform-origin:0 3px;">Количество Дт</div>
<div class="t " style="left:729px;top:854px;font-size:12.85px;line-height:16px;color:#4d4d4d;font-weight:bold;transform:scaleY(1.1);transform-origin:0 3px;">Счет Кт</div>
<div class="t " style="left:967px;top:854px;font-size:12.85px;line-height:16px;color:#4d4d4d;transform:scaleY(1.1);transform-origin:0 3px;">Субконто Кт</div>
<div class="t " style="left:1090px;top:854px;font-size:12.85px;line-height:16px;color:#4d4d4d;transform:scaleY(1.1);transform-origin:0 3px;">Количество Кт</div>
<div class="t " style="left:1197px;top:854px;font-size:12.85px;line-height:16px;color:#4d4d4d;font-weight:bold;transform:scaleY(1.1);transform-origin:0 3px;">Сумма БУ (RUB)</div>
<div class="t " style="left:1325px;top:854px;font-size:12.85px;line-height:16px;color:#4d4d4d;transform:scaleY(1.1);transform-origin:0 3px;">Содержание</div>
<div class="t " style="left:1537px;top:854px;font-size:12.85px;line-height:16px;color:#4d4d4d;transform:scaleY(1.1);transform-origin:0 3px;">Сумма НУ Дт (RUB)</div>
<div class="t " style="left:22px;top:885px;font-size:12.85px;line-height:16px;color:#4d4d4d;transform:scaleY(1.1);transform-origin:0 3px;">Организация</div>
<div class="t " style="left:227px;top:885px;font-size:12.85px;line-height:16px;color:#4d4d4d;transform:scaleY(1.1);transform-origin:0 3px;">Подразделение Дт, Направление Дт</div>
<div class="t " style="left:624px;top:885px;font-size:12.85px;line-height:16px;color:#4d4d4d;transform:scaleY(1.1);transform-origin:0 3px;">Валюта Дт</div>
<div class="t " style="left:729px;top:885px;font-size:12.85px;line-height:16px;color:#4d4d4d;transform:scaleY(1.1);transform-origin:0 3px;">Подразделение Кт, Направление Кт</div>
<div class="t " style="left:1090px;top:885px;font-size:12.85px;line-height:16px;color:#4d4d4d;transform:scaleY(1.1);transform-origin:0 3px;">Валюта Кт</div>
<div class="a" style="left:14px;top:910px;width:1667px;height:86px;background:#fdf2c8"></div>
<div class="a" style="left:14px;top:910px;width:1667px;height:1px;background:#fff"></div>
<div class="a" style="left:14px;top:995px;width:1667px;height:1px;background:#fff"></div>
<div class="a" style="left:14px;top:996px;width:1667px;height:1px;background:#e6e6e6"></div>
<div class="a" style="left:14px;top:997px;width:1667px;height:86px;background:#fff"></div>
<div class="a" style="left:14px;top:1083px;width:1667px;height:1px;background:#e6e6e6"></div>
<div class="a" style="left:14px;top:1084px;width:1667px;height:86px;background:#f9f9f9"></div>
<div class="a" style="left:14px;top:1170px;width:1667px;height:1px;background:#e6e6e6"></div>
<div class="a" style="left:218px;top:910px;width:1px;height:86px;background:#fff"></div>
<div class="a" style="left:461px;top:910px;width:1px;height:86px;background:#fff"></div>
<div class="a" style="left:615px;top:910px;width:1px;height:86px;background:#fff"></div>
<div class="a" style="left:720px;top:910px;width:1px;height:86px;background:#fff"></div>
<div class="a" style="left:958px;top:910px;width:1px;height:86px;background:#fff"></div>
<div class="a" style="left:1081px;top:910px;width:1px;height:86px;background:#fff"></div>
<div class="a" style="left:1188px;top:910px;width:1px;height:86px;background:#fff"></div>
<div class="a" style="left:1316px;top:910px;width:1px;height:86px;background:#fff"></div>
<div class="a" style="left:184px;top:910px;width:1px;height:28px;background:#fff"></div>
<div class="a" style="left:14px;top:938px;width:1174px;height:1px;background:#fff"></div>
<div class="a" style="left:219px;top:967px;width:969px;height:1px;background:#fff"></div>
<div class="a" style="left:14px;top:911px;width:170px;height:27px;box-sizing:border-box;border:2px solid #f9c712;background:#fde48f"></div>
<div class="t " style="left:22px;top:915px;font-size:9.5px;line-height:10px;color:#12943a;font-weight:bold;">Дт</div>
<div class="t " style="left:28px;top:923px;font-size:9.5px;line-height:10px;color:#e0282f;font-weight:bold;">Кт</div>
<div class="t " style="left:47px;top:916px;font-size:12.85px;line-height:16px;color:#333;transform:scaleY(1.1);transform-origin:0 3px;">10.10.2022 12:00:00</div>
<div class="a" style="left:160px;top:916px;width:49px;height:16px;"><div class="t" style="right:0;top:0;font-size:13px;line-height:16px;color:#333">1</div></div>
<div class="t " style="left:46px;top:945px;font-size:12.85px;line-height:16px;color:#333;transform:scaleY(1.1);transform-origin:0 3px;">Стройснаб</div>
<div class="t " style="left:227px;top:916px;font-size:12.85px;line-height:16px;color:#333;font-weight:bold;transform:scaleY(1.1);transform-origin:0 3px;">19.03</div>
<div class="t " style="left:470px;top:916px;font-size:12.85px;line-height:16px;color:#333;transform:scaleY(1.1);transform-origin:0 3px;">Ассоль</div>
<div class="t " style="left:470px;top:945px;font-size:12.85px;line-height:16px;color:#333;transform:scaleY(1.1);transform-origin:0 3px;">Приобретение товар...</div>
<div class="t " style="left:729px;top:916px;font-size:12.85px;line-height:16px;color:#333;font-weight:bold;transform:scaleY(1.1);transform-origin:0 3px;">60.01</div>
<div class="t " style="left:967px;top:916px;font-size:12.85px;line-height:16px;color:#333;transform:scaleY(1.1);transform-origin:0 3px;">Ассоль</div>
<div class="t " style="left:967px;top:945px;font-size:12.85px;line-height:16px;color:#aaa;transform:scaleY(1.1);transform-origin:0 3px;">&lt;Договоры&gt;</div>
<div class="a" style="left:1200px;top:916px;width:108px;height:16px;"><div class="t" style="right:0;top:0;font-size:13px;line-height:16px;color:#333;font-weight:bold">7 000,00</div></div>
<div class="t " style="left:1325px;top:916px;font-size:12.85px;line-height:16px;color:#333;transform:scaleY(1.1);transform-origin:0 3px;">НДС при приобретении</div>
<div class="t " style="left:22px;top:1002px;font-size:9.5px;line-height:10px;color:#12943a;font-weight:bold;">Дт</div>
<div class="t " style="left:28px;top:1010px;font-size:9.5px;line-height:10px;color:#e0282f;font-weight:bold;">Кт</div>
<div class="t " style="left:47px;top:1003px;font-size:12.85px;line-height:16px;color:#333;transform:scaleY(1.1);transform-origin:0 3px;">10.10.2022 12:00:00</div>
<div class="a" style="left:160px;top:1003px;width:49px;height:16px;"><div class="t" style="right:0;top:0;font-size:13px;line-height:16px;color:#333">2</div></div>
<div class="t " style="left:46px;top:1032px;font-size:12.85px;line-height:16px;color:#333;transform:scaleY(1.1);transform-origin:0 3px;">Стройснаб</div>
<div class="t " style="left:227px;top:1003px;font-size:12.85px;line-height:16px;color:#333;font-weight:bold;transform:scaleY(1.1);transform-origin:0 3px;">10.06</div>
<div class="t " style="left:227px;top:1032px;font-size:12.85px;line-height:16px;color:#333;transform:scaleY(1.1);transform-origin:0 3px;">Служба снабжения</div>
<div class="t " style="left:470px;top:1003px;font-size:12.85px;line-height:16px;color:#333;transform:scaleY(1.1);transform-origin:0 3px;">Стружка древесная</div>
<div class="t " style="left:470px;top:1032px;font-size:12.85px;line-height:16px;color:#333;transform:scaleY(1.1);transform-origin:0 3px;">Склад отдела снабж...</div>
<div class="t " style="left:729px;top:1003px;font-size:12.85px;line-height:16px;color:#333;font-weight:bold;transform:scaleY(1.1);transform-origin:0 3px;">19.03</div>
<div class="t " style="left:967px;top:1003px;font-size:12.85px;line-height:16px;color:#333;transform:scaleY(1.1);transform-origin:0 3px;">Ассоль</div>
<div class="t " style="left:967px;top:1032px;font-size:12.85px;line-height:16px;color:#333;transform:scaleY(1.1);transform-origin:0 3px;">Приобретение т...</div>
<div class="a" style="left:1200px;top:1003px;width:108px;height:16px;"><div class="t" style="right:0;top:0;font-size:13px;line-height:16px;color:#333;font-weight:bold">7 000,00</div></div>
<div class="t " style="left:1325px;top:1003px;font-size:12.85px;line-height:16px;color:#333;transform:scaleY(1.1);transform-origin:0 3px;">Включение НДС в стоимость</div>
<div class="a" style="left:1529px;top:1003px;width:152px;height:16px;overflow:hidden"><div class="t" style="left:1653px;top:0;font-size:13px;line-height:16px;color:#333;margin-left:-1529px">7 000,00</div></div>
<div class="t " style="left:22px;top:1089px;font-size:9.5px;line-height:10px;color:#12943a;font-weight:bold;">Дт</div>
<div class="t " style="left:28px;top:1097px;font-size:9.5px;line-height:10px;color:#e0282f;font-weight:bold;">Кт</div>
<div class="t " style="left:47px;top:1090px;font-size:12.85px;line-height:16px;color:#333;transform:scaleY(1.1);transform-origin:0 3px;">10.10.2022 12:00:00</div>
<div class="a" style="left:160px;top:1090px;width:49px;height:16px;"><div class="t" style="right:0;top:0;font-size:13px;line-height:16px;color:#333">3</div></div>
<div class="t " style="left:46px;top:1119px;font-size:12.85px;line-height:16px;color:#333;transform:scaleY(1.1);transform-origin:0 3px;">Стройснаб</div>
<div class="t " style="left:227px;top:1090px;font-size:12.85px;line-height:16px;color:#333;font-weight:bold;transform:scaleY(1.1);transform-origin:0 3px;">10.06</div>
<div class="t " style="left:227px;top:1119px;font-size:12.85px;line-height:16px;color:#333;transform:scaleY(1.1);transform-origin:0 3px;">Служба снабжения</div>
<div class="t " style="left:470px;top:1090px;font-size:12.85px;line-height:16px;color:#333;transform:scaleY(1.1);transform-origin:0 3px;">Стружка древесная</div>
<div class="t " style="left:470px;top:1119px;font-size:12.85px;line-height:16px;color:#333;transform:scaleY(1.1);transform-origin:0 3px;">Склад отдела снабж...</div>
<div class="a" style="left:612px;top:1090px;width:100px;height:16px;"><div class="t" style="right:0;top:0;font-size:13px;line-height:16px;color:#333">1 000,000</div></div>
<div class="t " style="left:729px;top:1090px;font-size:12.85px;line-height:16px;color:#333;font-weight:bold;transform:scaleY(1.1);transform-origin:0 3px;">60.01</div>
<div class="t " style="left:967px;top:1090px;font-size:12.85px;line-height:16px;color:#333;transform:scaleY(1.1);transform-origin:0 3px;">Ассоль</div>
<div class="t " style="left:967px;top:1119px;font-size:12.85px;line-height:16px;color:#aaa;transform:scaleY(1.1);transform-origin:0 3px;">&lt;Договоры&gt;</div>
<div class="a" style="left:1200px;top:1090px;width:108px;height:16px;"><div class="t" style="right:0;top:0;font-size:13px;line-height:16px;color:#333;font-weight:bold">35 000,00</div></div>
<div class="t " style="left:1325px;top:1090px;font-size:12.85px;line-height:16px;color:#333;transform:scaleY(1.1);transform-origin:0 3px;">Поступление товаров на склад</div>
<div class="a" style="left:1529px;top:1090px;width:152px;height:16px;overflow:hidden"><div class="t" style="left:1646px;top:0;font-size:13px;line-height:16px;color:#333;margin-left:-1529px">35 000,00</div></div>
<div class="a" style="left:216px;top:910px;width:1315px;height:173px;box-sizing:border-box;border:3px solid #ff0000"></div>
<div class="a bw" style="left:15px;top:1214px;width:73px;height:24px;"></div>
<div class="a" style="left:52px;top:1215px;width:1px;height:22px;background:#d4d4d4"></div>
<svg width="16" height="12" style="position:absolute;left:27px;top:1220px"><path d="M0 6L6 0.5V4H13V8H6V11.5Z" fill="#555"/></svg>
<svg width="16" height="12" style="position:absolute;left:63px;top:1220px"><path d="M14 6L8 0.5V4H1V8H8V11.5Z" fill="#aaa"/></svg>
<div class="t " style="left:133px;top:1214px;font-size:18.9px;line-height:22px;color:#000;">Движения документа (Горизонтально)</div>
<svg width="16" height="16" style="position:absolute;left:1548px;top:1217px" fill="none" stroke="#666" stroke-width="1.1"><rect x="1.5" y="1.5" width="14" height="13.5" rx="1.5"/><rect x="4.5" y="1.5" width="8" height="5"/><path d="M6 3.5H11M6 5H11" stroke-width="0.8"/><rect x="4.5" y="11" width="8" height="4" fill="#555" stroke="none"/><rect x="6" y="12" width="2" height="3" fill="#fff" stroke="none"/></svg>
<svg width="17" height="16" style="position:absolute;left:1578px;top:1216px" fill="none" stroke="#666" stroke-width="1.1"><rect x="4" y="1.5" width="9" height="3.5"/><rect x="1.5" y="5" width="15" height="8" rx="1.5"/><rect x="3.8" y="8.5" width="9.5" height="7" fill="#fff"/><path d="M5.5 11H10M5.5 13H11" stroke-width="0.8"/><path d="M11.5 6.8H14.5" stroke-width="0.8"/></svg>
<svg width="16" height="17" style="position:absolute;left:1608px;top:1216px" fill="none" stroke="#666" stroke-width="1.1"><path d="M8 15.5H2.5Q1.5 15.5 1.5 14.5V2.5Q1.5 1.5 2.5 1.5H12.5Q13.5 1.5 13.5 2.5V5"/><circle cx="10" cy="9.5" r="3.2"/><path d="M12.3 11.8L15 14.5" stroke-width="1.8"/></svg>
<svg width="4" height="12" style="position:absolute;left:1644px;top:1218px" fill="#666"><circle cx="2" cy="1.6" r="1.5"/><circle cx="2" cy="5.8" r="1.5"/><circle cx="2" cy="10" r="1.5"/></svg>
<svg width="9" height="9" style="position:absolute;left:1672px;top:1220px"><path d="M0.7 0.7L7.8 7.8M7.8 0.7L0.7 7.8" stroke="#4a4a4a" stroke-width="1.25"/></svg>
<div class="a" style="left:15px;top:1247px;width:1669px;height:37px;background:#fdf8dc"></div>
<div class="a" style="left:21px;top:1258px;width:15px;height:15px;box-sizing:border-box;border:1px solid #999;border-radius:2px;background:#fff"></div>
<svg width="14" height="13" style="position:absolute;left:23px;top:1256px"><path d="M1.5 7.5L5 11L12.5 1.5" fill="none" stroke="#17953f" stroke-width="2.2"/></svg>
<div class="t " style="left:47px;top:1258px;font-size:12.85px;line-height:16px;color:#4d4d4d;transform:scaleY(1.1);transform-origin:0 3px;">Выводить только:</div>
<div class="a" style="left:158px;top:1253px;width:410px;height:25px;box-sizing:border-box;border:1px solid #a6a6a6;border-radius:3px;background:#fff"></div>
<div class="a" style="left:546px;top:1254px;width:1px;height:23px;background:#a6a6a6"></div>
<div class="t " style="left:552px;top:1258px;font-size:12.85px;line-height:16px;color:#4d4d4d;transform:scaleY(1.1);transform-origin:0 3px;">...</div>
<div class="t " style="left:162px;top:1257px;font-size:12.85px;line-height:16px;color:#333;transform:scaleY(1.1);transform-origin:0 3px;">Регистр накопления Активы и пассивы; Регистр накопления Вы</div>
<svg width="15" height="13" style="position:absolute;left:1657px;top:1259px"><defs><linearGradient id="fg" x1="0" x2="1"><stop offset="0" stop-color="#e6eaf0"/><stop offset="1" stop-color="#b4bcc8"/></linearGradient></defs><path d="M0.8 0.8H13.5L8.6 6V11.5Q8.6 12.2 7.9 12.2H6.4Q5.7 12.2 5.7 11.5V6Z" fill="url(#fg)" stroke="#8a93a0" stroke-width="0.9"/></svg>
<div class="a by" style="left:15px;top:1293px;width:128px;height:25px;"></div>
<div class="t " style="left:29px;top:1298px;font-size:13.4px;line-height:16px;color:#333;font-weight:bold;transform:scaleY(1.1);transform-origin:0 3px;">Сформировать</div>
<div class="a bw" style="left:163px;top:1293px;width:144px;height:25px;"></div>
<div class="a" style="left:265px;top:1294px;width:1px;height:24px;background:#c8c8c8"></div>
<div class="t " style="left:177px;top:1298px;font-size:13.4px;line-height:16px;color:#4d4d4d;transform:scaleY(1.1);transform-origin:0 3px;">Настройки...</div>
<svg width="17" height="16" style="position:absolute;left:271px;top:1298px"><path d="M0.5 2.5H5L6.5 4H13.5V11.5H0.5Z" fill="#f3d27a" stroke="#c9a440"/><rect x="7.5" y="6.5" width="7" height="9" fill="#fff" stroke="#6a7a90"/><rect x="9" y="11" width="1" height="3" fill="#e04040"/><rect x="11" y="10" width="1" height="4" fill="#40a840"/></svg>
<svg width="7" height="4" style="position:absolute;left:294px;top:1305px"><path d="M0.5 0.5H6.5L3.5 3.5Z" fill="#4d4d4d"/></svg>
<div class="a bw" style="left:327px;top:1293px;width:60px;height:25px;"></div>
<div class="a" style="left:357px;top:1294px;width:1px;height:24px;background:#c8c8c8"></div>
<svg width="13" height="13" style="position:absolute;left:336px;top:1299px" fill="none" stroke="#2b6cb0" stroke-width="1.8"><circle cx="5" cy="5" r="3.8"/><path d="M7.8 7.8L12 12"/></svg>
<svg width="15" height="14" style="position:absolute;left:365px;top:1298px" fill="none" stroke="#2b6cb0" stroke-width="1.6"><circle cx="5.5" cy="7.5" r="3.3"/><path d="M8 10L11 13"/><path d="M2 4A6 6 0 0 1 12 3.5"/><path d="M13.5 1V5H9.5" fill="#2b6cb0" stroke="none"/></svg>
<div class="a bw" style="left:408px;top:1293px;width:201px;height:25px;"></div>
<div class="a" style="left:437px;top:1294px;width:1px;height:24px;background:#c8c8c8"></div>
<div class="a" style="left:467px;top:1294px;width:1px;height:24px;background:#c8c8c8"></div>
<svg width="16" height="14" style="position:absolute;left:415px;top:1299px"><path d="M3 0V12" stroke="#f07020" stroke-width="1.3"/><path d="M0.5 10L3 13.5L5.5 10Z" fill="#f07020"/><g fill="#333"><rect x="6" y="1" width="2" height="1"/><rect x="9" y="1" width="6" height="1"/><rect x="9" y="4" width="6" height="1"/><rect x="9" y="7" width="6" height="1"/><rect x="9" y="10" width="6" height="1"/><rect x="9" y="12" width="6" height="1"/></g></svg>
<svg width="16" height="14" style="position:absolute;left:445px;top:1298px"><path d="M3 2V14" stroke="#f07020" stroke-width="1.3"/><path d="M0.5 4L3 0.5L5.5 4Z" fill="#f07020"/><g fill="#333"><rect x="7" y="1" width="2" height="1"/><rect x="10" y="1" width="6" height="1"/><rect x="7" y="4" width="2" height="1"/><rect x="10" y="4" width="6" height="1"/></g></svg>
<div class="t " style="left:480px;top:1298px;font-size:13.4px;line-height:16px;color:#4d4d4d;transform:scaleY(1.1);transform-origin:0 3px;">Разворачивать до</div>
<svg width="7" height="4" style="position:absolute;left:595px;top:1305px"><path d="M0.5 0.5H6.5L3.5 3.5Z" fill="#4d4d4d"/></svg>
<div class="a bw" style="left:629px;top:1293px;width:60px;height:25px;"></div>
<div class="a" style="left:659px;top:1294px;width:1px;height:24px;background:#c8c8c8"></div>
<svg width="15" height="14" style="position:absolute;left:637px;top:1299px"><rect x="3.5" y="0.5" width="8" height="4" fill="#fff" stroke="#3d5a80"/><rect x="0.5" y="4.5" width="14" height="6" rx="1.5" fill="#3d5a80"/><rect x="3.5" y="8.5" width="8" height="5" fill="#fff" stroke="#3d5a80"/></svg>
<svg width="14" height="15" style="position:absolute;left:667px;top:1298px" fill="none" stroke="#3d5a80" stroke-width="1.2"><path d="M6 14.5H0.5V0.5H7.5L10.5 3.5V6"/><circle cx="8" cy="9.5" r="2.8" stroke-width="1.6"/><path d="M10 11.5L13 14.5" stroke-width="1.8"/></svg>
<div class="a bw" style="left:709px;top:1293px;width:72px;height:25px;"></div>
<div class="a" style="left:739px;top:1294px;width:1px;height:24px;background:#c8c8c8"></div>
<svg width="14" height="14" style="position:absolute;left:717px;top:1299px" fill="#1f4f86"><rect x="6" y="0" width="2" height="7"/><path d="M3 6H11L7 10Z"/><rect x="0" y="11" width="14" height="2"/><rect x="0" y="9" width="2" height="3"/><rect x="12" y="9" width="2" height="3"/></svg>
<svg width="16" height="12" style="position:absolute;left:746px;top:1300px"><rect x="0.5" y="0.5" width="15" height="11" fill="#f4c15a" stroke="#d39a2a"/><path d="M0.5 0.5L8 7L15.5 0.5" fill="none" stroke="#d39a2a"/></svg>
<svg width="7" height="4" style="position:absolute;left:766px;top:1305px"><path d="M0.5 0.5H6.5L3.5 3.5Z" fill="#4d4d4d"/></svg>
<svg width="12" height="15" style="position:absolute;left:1165px;top:1300px"><path d="M11 1.2H1.2L6.4 7.2L1.2 13.3H11" fill="none" stroke="#263746" stroke-width="2.1" stroke-linejoin="miter"/></svg>
<div class="a" style="left:1189px;top:1294px;width:410px;height:25px;box-sizing:border-box;border:1px solid #a6a6a6;border-radius:3px;background:#fff"></div>
<div class="t " style="left:1192px;top:1298px;font-size:12.85px;line-height:16px;color:#bcbcbc;transform:scaleY(1.1);transform-origin:0 3px;">Введите слово для фильтра (название товара, покупателя и пр.)</div>
<div class="t " style="left:1605px;top:1297px;font-size:12.85px;line-height:16px;color:#2b74c8;font-weight:bold;transform:scaleY(1.1);transform-origin:0 3px;">?</div>
<div class="a bw" style="left:1623px;top:1293px;width:61px;height:25px;"></div>
<div class="t " style="left:1637px;top:1298px;font-size:13.4px;line-height:16px;color:#4d4d4d;transform:scaleY(1.1);transform-origin:0 3px;">Еще</div>
<svg width="7" height="4" style="position:absolute;left:1669px;top:1305px"><path d="M0.5 0.5H6.5L3.5 3.5Z" fill="#4d4d4d"/></svg>
<div class="a" style="left:15px;top:1329px;width:1669px;height:190px;box-sizing:border-box;border:1px solid #aaa;background:#fff"></div>
<div class="a" style="left:44px;top:1330px;width:1px;height:48px;background:#c0c0c0"></div>
<div class="t " style="left:50px;top:1341px;font-size:23.9px;line-height:28px;color:#00953e;">Движения документа Приобретение товаров и услуг СБ00-000002 от 10.10.2022 12:00:00</div>
<svg width="7" height="4" style="position:absolute;left:1672px;top:1340px"><path d="M0 4H7L3.5 0Z" fill="#bbb"/></svg>
<div class="a" style="left:1672px;top:1353px;width:8px;height:161px;background:#9a9a9a;border-radius:4px 4px 0 0"></div>
<div class="a" style="left:44px;top:1383px;width:1627px;height:25px;background:#f9f4e0"></div>
<div class="a" style="left:44px;top:1408px;width:1627px;height:64px;background:#f3eac6"></div>
<div class="a" style="left:44px;top:1475px;width:1627px;height:29px;background:#fff"></div>
<div class="a" style="left:44px;top:1382px;width:1627px;height:1px;background:#d3c68e"></div>
<div class="a" style="left:44px;top:1407px;width:1627px;height:1px;background:#d3c68e"></div>
<div class="a" style="left:44px;top:1424px;width:1627px;height:1px;background:#d3c68e"></div>
<div class="a" style="left:44px;top:1488px;width:1627px;height:1px;background:#d3c68e"></div>
<div class="a" style="left:44px;top:1503px;width:1627px;height:1px;background:#d3c68e"></div>
<div class="a" style="left:350px;top:1407px;width:1px;height:96px;background:#d3c68e"></div>
<div class="a" style="left:1251px;top:1407px;width:1px;height:96px;background:#d3c68e"></div>
<div class="a" style="left:1451px;top:1407px;width:1px;height:96px;background:#d3c68e"></div>
<div class="a" style="left:119px;top:1424px;width:1px;height:79px;background:#d3c68e"></div>
<div class="a" style="left:203px;top:1424px;width:1px;height:79px;background:#d3c68e"></div>
<div class="a" style="left:444px;top:1424px;width:1px;height:79px;background:#d3c68e"></div>
<div class="a" style="left:802px;top:1424px;width:1px;height:79px;background:#d3c68e"></div>
<div class="a" style="left:886px;top:1424px;width:1px;height:79px;background:#d3c68e"></div>
<div class="a" style="left:957px;top:1424px;width:1px;height:79px;background:#d3c68e"></div>
<div class="a" style="left:1015px;top:1424px;width:1px;height:79px;background:#d3c68e"></div>
<div class="a" style="left:1204px;top:1424px;width:1px;height:79px;background:#d3c68e"></div>
<div class="a" style="left:1331px;top:1424px;width:1px;height:79px;background:#d3c68e"></div>
<div class="a" style="left:1402px;top:1424px;width:1px;height:79px;background:#d3c68e"></div>
<div class="a" style="left:1660px;top:1424px;width:1px;height:79px;background:#d3c68e"></div>
<div class="a" style="left:43px;top:1378px;width:1628px;height:1px;background:#000"></div>
<div class="a" style="left:43px;top:1378px;width:1px;height:130px;background:#000"></div>
<div class="a" style="left:44px;top:1508px;width:1px;height:7px;background:#9a9a9a"></div>
<div class="t " style="left:48px;top:1384px;font-size:18.85px;line-height:23px;color:#1a53c0;text-decoration:underline;line-height:22px;">Регистр накопления "НДС предъявленный" (2)</div>
<div class="a" style="left:19px;top:1390px;width:11px;height:11px;box-sizing:border-box;border:1px solid #999;background:#fff"></div>
<div class="a" style="left:21px;top:1395px;width:7px;height:1px;background:#555"></div>
<div class="a" style="left:24px;top:1401px;width:1px;height:103px;background:#999"></div>
<div class="a" style="left:24px;top:1503px;width:19px;height:1px;background:#999"></div>
<div class="t " style="left:48px;top:1409px;font-size:12.75px;line-height:16px;color:#333;">Стандартные реквизиты</div>
<div class="t " style="left:354px;top:1409px;font-size:12.75px;line-height:16px;color:#333;">Измерения</div>
<div class="t " style="left:1255px;top:1409px;font-size:12.75px;line-height:16px;color:#333;">Ресурсы</div>
<div class="t " style="left:1455px;top:1409px;font-size:12.75px;line-height:16px;color:#333;">Реквизиты</div>
<div class="t " style="left:48px;top:1426px;font-size:12.75px;line-height:16px;color:#333;">Вид</div>
<div class="t " style="left:48px;top:1442px;font-size:12.75px;line-height:16px;color:#333;">движения</div>
<div class="t " style="left:123px;top:1426px;font-size:12.75px;line-height:16px;color:#333;">Активность</div>
<div class="t " style="left:207px;top:1426px;font-size:12.75px;line-height:16px;color:#333;">Период</div>
<div class="t " style="left:354px;top:1426px;font-size:12.75px;line-height:16px;color:#333;">Организация</div>
<div class="t " style="left:448px;top:1426px;font-size:12.75px;line-height:16px;color:#333;">Счет-фактура</div>
<div class="t " style="left:806px;top:1426px;font-size:12.75px;line-height:16px;color:#333;">Поставщик</div>
<div class="t " style="left:890px;top:1426px;font-size:12.75px;line-height:16px;color:#333;">Вид</div>
<div class="t " style="left:890px;top:1442px;font-size:12.75px;line-height:16px;color:#333;">ценности</div>
<div class="t " style="left:961px;top:1426px;font-size:12.75px;line-height:16px;color:#333;">Ставка</div>
<div class="t " style="left:961px;top:1442px;font-size:12.75px;line-height:16px;color:#333;">НДС</div>
<div class="t " style="left:1019px;top:1426px;font-size:12.75px;line-height:16px;color:#333;">Вид деятельности НДС</div>
<div class="t " style="left:1208px;top:1426px;font-size:12.75px;line-height:16px;color:#333;">К</div>
<div class="t " style="left:1208px;top:1442px;font-size:12.75px;line-height:16px;color:#333;">с</div>
<div class="t " style="left:1255px;top:1426px;font-size:12.75px;line-height:16px;color:#333;">Сумма без</div>
<div class="t " style="left:1255px;top:1442px;font-size:12.75px;line-height:16px;color:#333;">НДС (регл.)</div>
<div class="t " style="left:1335px;top:1426px;font-size:12.75px;line-height:16px;color:#333;">НДС</div>
<div class="t " style="left:1335px;top:1442px;font-size:12.75px;line-height:16px;color:#333;">(регл.)</div>
<div class="t " style="left:1405px;top:1426px;font-size:12.75px;line-height:16px;color:#333;">НДС</div>
<div class="t " style="left:1405px;top:1442px;font-size:12.75px;line-height:16px;color:#333;">(упр.)</div>
<div class="t " style="left:1455px;top:1426px;font-size:12.75px;line-height:16px;color:#333;">Событие</div>
<div class="t " style="left:1230px;top:1442px;font-size:12.75px;line-height:16px;color:#333;">я)</div>
<div class="t " style="left:61px;top:1474px;font-size:11px;line-height:14px;color:#0a8a2a;">Приход</div>
<div class="t " style="left:122px;top:1474px;font-size:11px;line-height:14px;color:#333;">Да</div>
<div class="t " style="left:206px;top:1474px;font-size:11px;line-height:14px;color:#333;">10.10.2022 12:00:00</div>
<div class="t " style="left:353px;top:1474px;font-size:11px;line-height:14px;color:#333;">Стройснаб</div>
<div class="t " style="left:447px;top:1474px;font-size:11px;line-height:14px;color:#333;">Приобретение товаров и услуг СБ00-000002 от 10.10.2022 12:00:00</div>
<div class="t " style="left:805px;top:1474px;font-size:11px;line-height:14px;color:#333;">Ассоль</div>
<div class="t " style="left:889px;top:1474px;font-size:11px;line-height:14px;color:#333;">Товары</div>
<div class="t " style="left:960px;top:1474px;font-size:11px;line-height:14px;color:#333;">20%</div>
<div class="t " style="left:1018px;top:1474px;font-size:11px;line-height:14px;color:#333;">Продажа не облагается НДС</div>
<div class="a" style="left:1249px;top:1474px;width:80px;height:14px;"><div class="t" style="right:0;top:0;font-size:11px;line-height:14px;color:#333">35 000,00</div></div>
<div class="a" style="left:1319px;top:1474px;width:80px;height:14px;"><div class="t" style="right:0;top:0;font-size:11px;line-height:14px;color:#333">7 000,00</div></div>
<div class="a" style="left:1369px;top:1474px;width:80px;height:14px;"><div class="t" style="right:0;top:0;font-size:11px;line-height:14px;color:#333">96,86</div></div>
<div class="t " style="left:61px;top:1489px;font-size:11px;line-height:14px;color:#e8141e;">Расход</div>
<div class="t " style="left:122px;top:1489px;font-size:11px;line-height:14px;color:#333;">Да</div>
<div class="t " style="left:206px;top:1489px;font-size:11px;line-height:14px;color:#333;">10.10.2022 12:00:00</div>
<div class="t " style="left:353px;top:1489px;font-size:11px;line-height:14px;color:#333;">Стройснаб</div>
<div class="t " style="left:447px;top:1489px;font-size:11px;line-height:14px;color:#333;">Приобретение товаров и услуг СБ00-000002 от 10.10.2022 12:00:00</div>
<div class="t " style="left:805px;top:1489px;font-size:11px;line-height:14px;color:#333;">Ассоль</div>
<div class="t " style="left:889px;top:1489px;font-size:11px;line-height:14px;color:#333;">Товары</div>
<div class="t " style="left:960px;top:1489px;font-size:11px;line-height:14px;color:#333;">20%</div>
<div class="t " style="left:1018px;top:1489px;font-size:11px;line-height:14px;color:#333;">Продажа не облагается НДС</div>
<div class="a" style="left:1249px;top:1489px;width:80px;height:14px;"><div class="t" style="right:0;top:0;font-size:11px;line-height:14px;color:#333">35 000,00</div></div>
<div class="a" style="left:1319px;top:1489px;width:80px;height:14px;"><div class="t" style="right:0;top:0;font-size:11px;line-height:14px;color:#333">7 000,00</div></div>
<div class="a" style="left:1369px;top:1489px;width:80px;height:14px;"><div class="t" style="right:0;top:0;font-size:11px;line-height:14px;color:#333">96,86</div></div>
<div class="t " style="left:1454px;top:1489px;font-size:11px;line-height:14px;color:#333;">Включение НДС в стоимость/расходы</div>
<div class="a" style="left:1234px;top:1379px;width:437px;height:1px;background:#000"></div>
<div class="a" style="left:1670px;top:1378px;width:1px;height:130px;background:#000"></div>
<svg width="1696" height="130" style="position:absolute;left:0;top:1378px"><path d="M1227.5,-10.50 C1227.5,-7.90 1216.5,-6.00 1216.5,-3.40 C1216.5,-0.80 1227.5,1.10 1227.5,3.70 C1227.5,6.30 1216.5,8.20 1216.5,10.80 C1216.5,13.40 1227.5,15.30 1227.5,17.90 C1227.5,20.50 1216.5,22.40 1216.5,25.00 C1216.5,27.60 1227.5,29.50 1227.5,32.10 C1227.5,34.70 1216.5,36.60 1216.5,39.20 C1216.5,41.80 1227.5,43.70 1227.5,46.30 C1227.5,48.90 1216.5,50.80 1216.5,53.40 C1216.5,56.00 1227.5,57.90 1227.5,60.50 C1227.5,63.10 1216.5,65.00 1216.5,67.60 C1216.5,70.20 1227.5,72.10 1227.5,74.70 C1227.5,77.30 1216.5,79.20 1216.5,81.80 C1216.5,84.40 1227.5,86.30 1227.5,88.90 C1227.5,91.50 1216.5,93.40 1216.5,96.00 C1216.5,98.60 1227.5,100.50 1227.5,103.10 C1227.5,105.70 1216.5,107.60 1216.5,110.20 C1216.5,112.80 1227.5,114.70 1227.5,117.30 C1227.5,119.90 1216.5,121.80 1216.5,124.40 C1216.5,127.00 1227.5,128.90 1227.5,131.50 C1227.5,134.10 1216.5,136.00 1216.5,138.60 C1216.5,141.20 1227.5,143.10 1227.5,145.70" fill="none" stroke="#fff" stroke-width="10.5"/><path d="M1221,-10.50 C1221,-7.90 1210,-6.00 1210,-3.40 C1210,-0.80 1221,1.10 1221,3.70 C1221,6.30 1210,8.20 1210,10.80 C1210,13.40 1221,15.30 1221,17.90 C1221,20.50 1210,22.40 1210,25.00 C1210,27.60 1221,29.50 1221,32.10 C1221,34.70 1210,36.60 1210,39.20 C1210,41.80 1221,43.70 1221,46.30 C1221,48.90 1210,50.80 1210,53.40 C1210,56.00 1221,57.90 1221,60.50 C1221,63.10 1210,65.00 1210,67.60 C1210,70.20 1221,72.10 1221,74.70 C1221,77.30 1210,79.20 1210,81.80 C1210,84.40 1221,86.30 1221,88.90 C1221,91.50 1210,93.40 1210,96.00 C1210,98.60 1221,100.50 1221,103.10 C1221,105.70 1210,107.60 1210,110.20 C1210,112.80 1221,114.70 1221,117.30 C1221,119.90 1210,121.80 1210,124.40 C1210,127.00 1221,128.90 1221,131.50 C1221,134.10 1210,136.00 1210,138.60 C1210,141.20 1221,143.10 1221,145.70" fill="none" stroke="#000" stroke-width="1.2"/><path d="M1234,-10.50 C1234,-7.90 1223,-6.00 1223,-3.40 C1223,-0.80 1234,1.10 1234,3.70 C1234,6.30 1223,8.20 1223,10.80 C1223,13.40 1234,15.30 1234,17.90 C1234,20.50 1223,22.40 1223,25.00 C1223,27.60 1234,29.50 1234,32.10 C1234,34.70 1223,36.60 1223,39.20 C1223,41.80 1234,43.70 1234,46.30 C1234,48.90 1223,50.80 1223,53.40 C1223,56.00 1234,57.90 1234,60.50 C1234,63.10 1223,65.00 1223,67.60 C1223,70.20 1234,72.10 1234,74.70 C1234,77.30 1223,79.20 1223,81.80 C1223,84.40 1234,86.30 1234,88.90 C1234,91.50 1223,93.40 1223,96.00 C1223,98.60 1234,100.50 1234,103.10 C1234,105.70 1223,107.60 1223,110.20 C1223,112.80 1234,114.70 1234,117.30 C1234,119.90 1223,121.80 1223,124.40 C1223,127.00 1234,128.90 1234,131.50 C1234,134.10 1223,136.00 1223,138.60 C1223,141.20 1234,143.10 1234,145.70" fill="none" stroke="#000" stroke-width="1.2"/></svg>
<div class="a" style="left:44px;top:1472px;width:1627px;height:36px;box-sizing:border-box;border:3px solid #ff0000"></div></body></html>
